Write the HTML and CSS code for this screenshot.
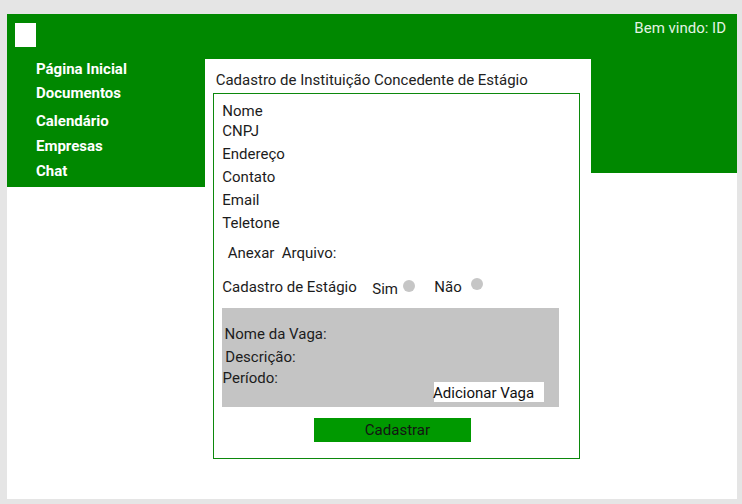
FILE: index.html
```html
<!DOCTYPE html>
<html lang="pt-BR">
<head>
<meta charset="utf-8">
<title>Cadastro de Instituição Concedente de Estágio</title>
<link rel="stylesheet" href="styles.css">
</head>
<body>
<div class="canvas">
  <header class="topbar">
    <div class="logo"></div>
    <span class="welcome">Bem vindo: ID</span>
  </header>
  <nav class="sidebar">
    <ul class="menu">
      <li>Página Inicial</li>
      <li>Documentos</li>
      <li>Calendário</li>
      <li>Empresas</li>
      <li>Chat</li>
    </ul>
  </nav>
  <main class="panel">
    <h1 class="title">Cadastro de Instituição Concedente de Estágio</h1>
    <form class="form-box">
      <div class="fields">
        <div class="field">Nome</div>
        <div class="field">CNPJ</div>
        <div class="field">Endereço</div>
        <div class="field">Contato</div>
        <div class="field">Email</div>
        <div class="field">Teletone</div>
      </div>
      <div class="attach">Anexar&nbsp; Arquivo:</div>
      <div class="internship">
        <span class="internship-label">Cadastro de Estágio</span>
        <span class="opt opt-sim">Sim</span>
        <span class="radio radio-sim"></span>
        <span class="opt opt-nao">Não</span>
        <span class="radio radio-nao"></span>
      </div>
      <div class="vaga">
        <div class="vaga-line vaga-nome">Nome da Vaga:</div>
        <div class="vaga-line vaga-desc">Descrição:</div>
        <div class="vaga-last">
          <span class="vaga-line">Período:</span>
          <span class="add-btn">Adicionar Vaga</span>
        </div>
      </div>
      <button type="button" class="submit">Cadastrar</button>
    </form>
  </main>
  <aside class="side-right"></aside>
</div>
</body>
</html>
```

FILE: styles.css
```css
* { box-sizing: border-box; }

html, body {
  margin: 0;
  padding: 0;
  background: #e5e5e5;
}

body {
  font-family: Roboto, "Liberation Sans", Arial, sans-serif;
  font-size: 15px;
  line-height: 16px;
  color: #1c1c1c;
  width: 742px;
  height: 504px;
  overflow: hidden;
}

.canvas {
  margin: 14px 5px 5px 7px;
  width: 730px;
  height: 485px;
  background: #ffffff;
  display: grid;
  grid-template-columns: 198px 386px 146px;
  grid-template-rows: 45px auto;
  align-items: start;
}

/* top bar */
.topbar {
  grid-column: 1 / -1;
  height: 45px;
  background: #008800;
  display: flex;
  justify-content: space-between;
  align-items: flex-start;
  padding: 0 11px 0 8px;
}

.logo {
  width: 21px;
  height: 24px;
  margin-top: 9px;
  background: #ffffff;
}

.welcome {
  margin-top: 5.5px;
  color: #e4f3e4;
}

/* left nav */
.sidebar {
  height: 128px;
  background: #008800;
  padding: 1.5px 0 0 29px;
}

.menu {
  list-style: none;
  margin: 0;
  padding: 0;
}

.menu li {
  color: #ffffff;
  font-weight: 700;
  line-height: 16px;
}

.menu li:nth-child(2) { margin-top: 8px; }
.menu li:nth-child(3) { margin-top: 12.5px; }
.menu li:nth-child(4) { margin-top: 9px; }
.menu li:nth-child(5) { margin-top: 9px; }

/* right aside */
.side-right {
  height: 114px;
  background: #008800;
}

/* center panel */
.panel {
  padding: 12.5px 0 0 8px;
}

.title {
  margin: 0 0 5.5px 2.7px;
  font-size: 15px;
  font-weight: 400;
  line-height: 16px;
  color: #222222;
}

.form-box {
  width: 367px;
  margin: 0;
  border: 1px solid #0c880c;
  padding: 0 0 16px 8.3px;
}

.fields {
  display: flex;
  flex-direction: column;
  gap: 7.2px;
  padding-top: 9.2px;
}

.fields .field:first-child {
  margin-bottom: -3.7px;
}

.attach {
  margin-top: 14px;
  padding-left: 5.4px;
}

.internship {
  display: flex;
  align-items: flex-start;
  margin-top: 17.4px;
}

.internship-label {
  width: 150px;
}

.opt-sim {
  width: 30.4px;
  margin-top: 2px;
}

.opt-nao {
  width: 36.4px;
  margin-left: 19.1px;
  margin-top: 0.3px;
}

.radio {
  width: 12.5px;
  height: 12.5px;
  border-radius: 50%;
  background: #c6c6c6;
}

.radio-sim { margin-top: 1.1px; }
.radio-nao { margin-top: -1.2px; }

.vaga {
  width: 337px;
  margin-top: 11.1px;
  background: #c4c4c4;
  padding: 17.7px 0 5px 0;
}

.vaga-nome { padding-left: 2.3px; }

.vaga-desc {
  padding-left: 3px;
  margin-top: 7.8px;
}

.vaga-last {
  display: flex;
  align-items: flex-start;
  margin-top: 5px;
  padding-left: 0.3px;
}

.add-btn {
  width: 110px;
  height: 20px;
  margin: 11.5px 15.7px 0 auto;
  padding-top: 1px;
  background: #ffffff;
  line-height: 20px;
  color: #111111;
  text-indent: -0.6px;
  white-space: nowrap;
  overflow: visible;
}

.submit {
  display: block;
  width: 157px;
  height: 24px;
  margin: 11px 0 0 91.7px;
  padding: 0 0 0 10px;
  border: 0;
  background: #009900;
  font-family: inherit;
  font-size: 15px;
  line-height: 24px;
  color: #141414;
  text-align: center;
}
```
